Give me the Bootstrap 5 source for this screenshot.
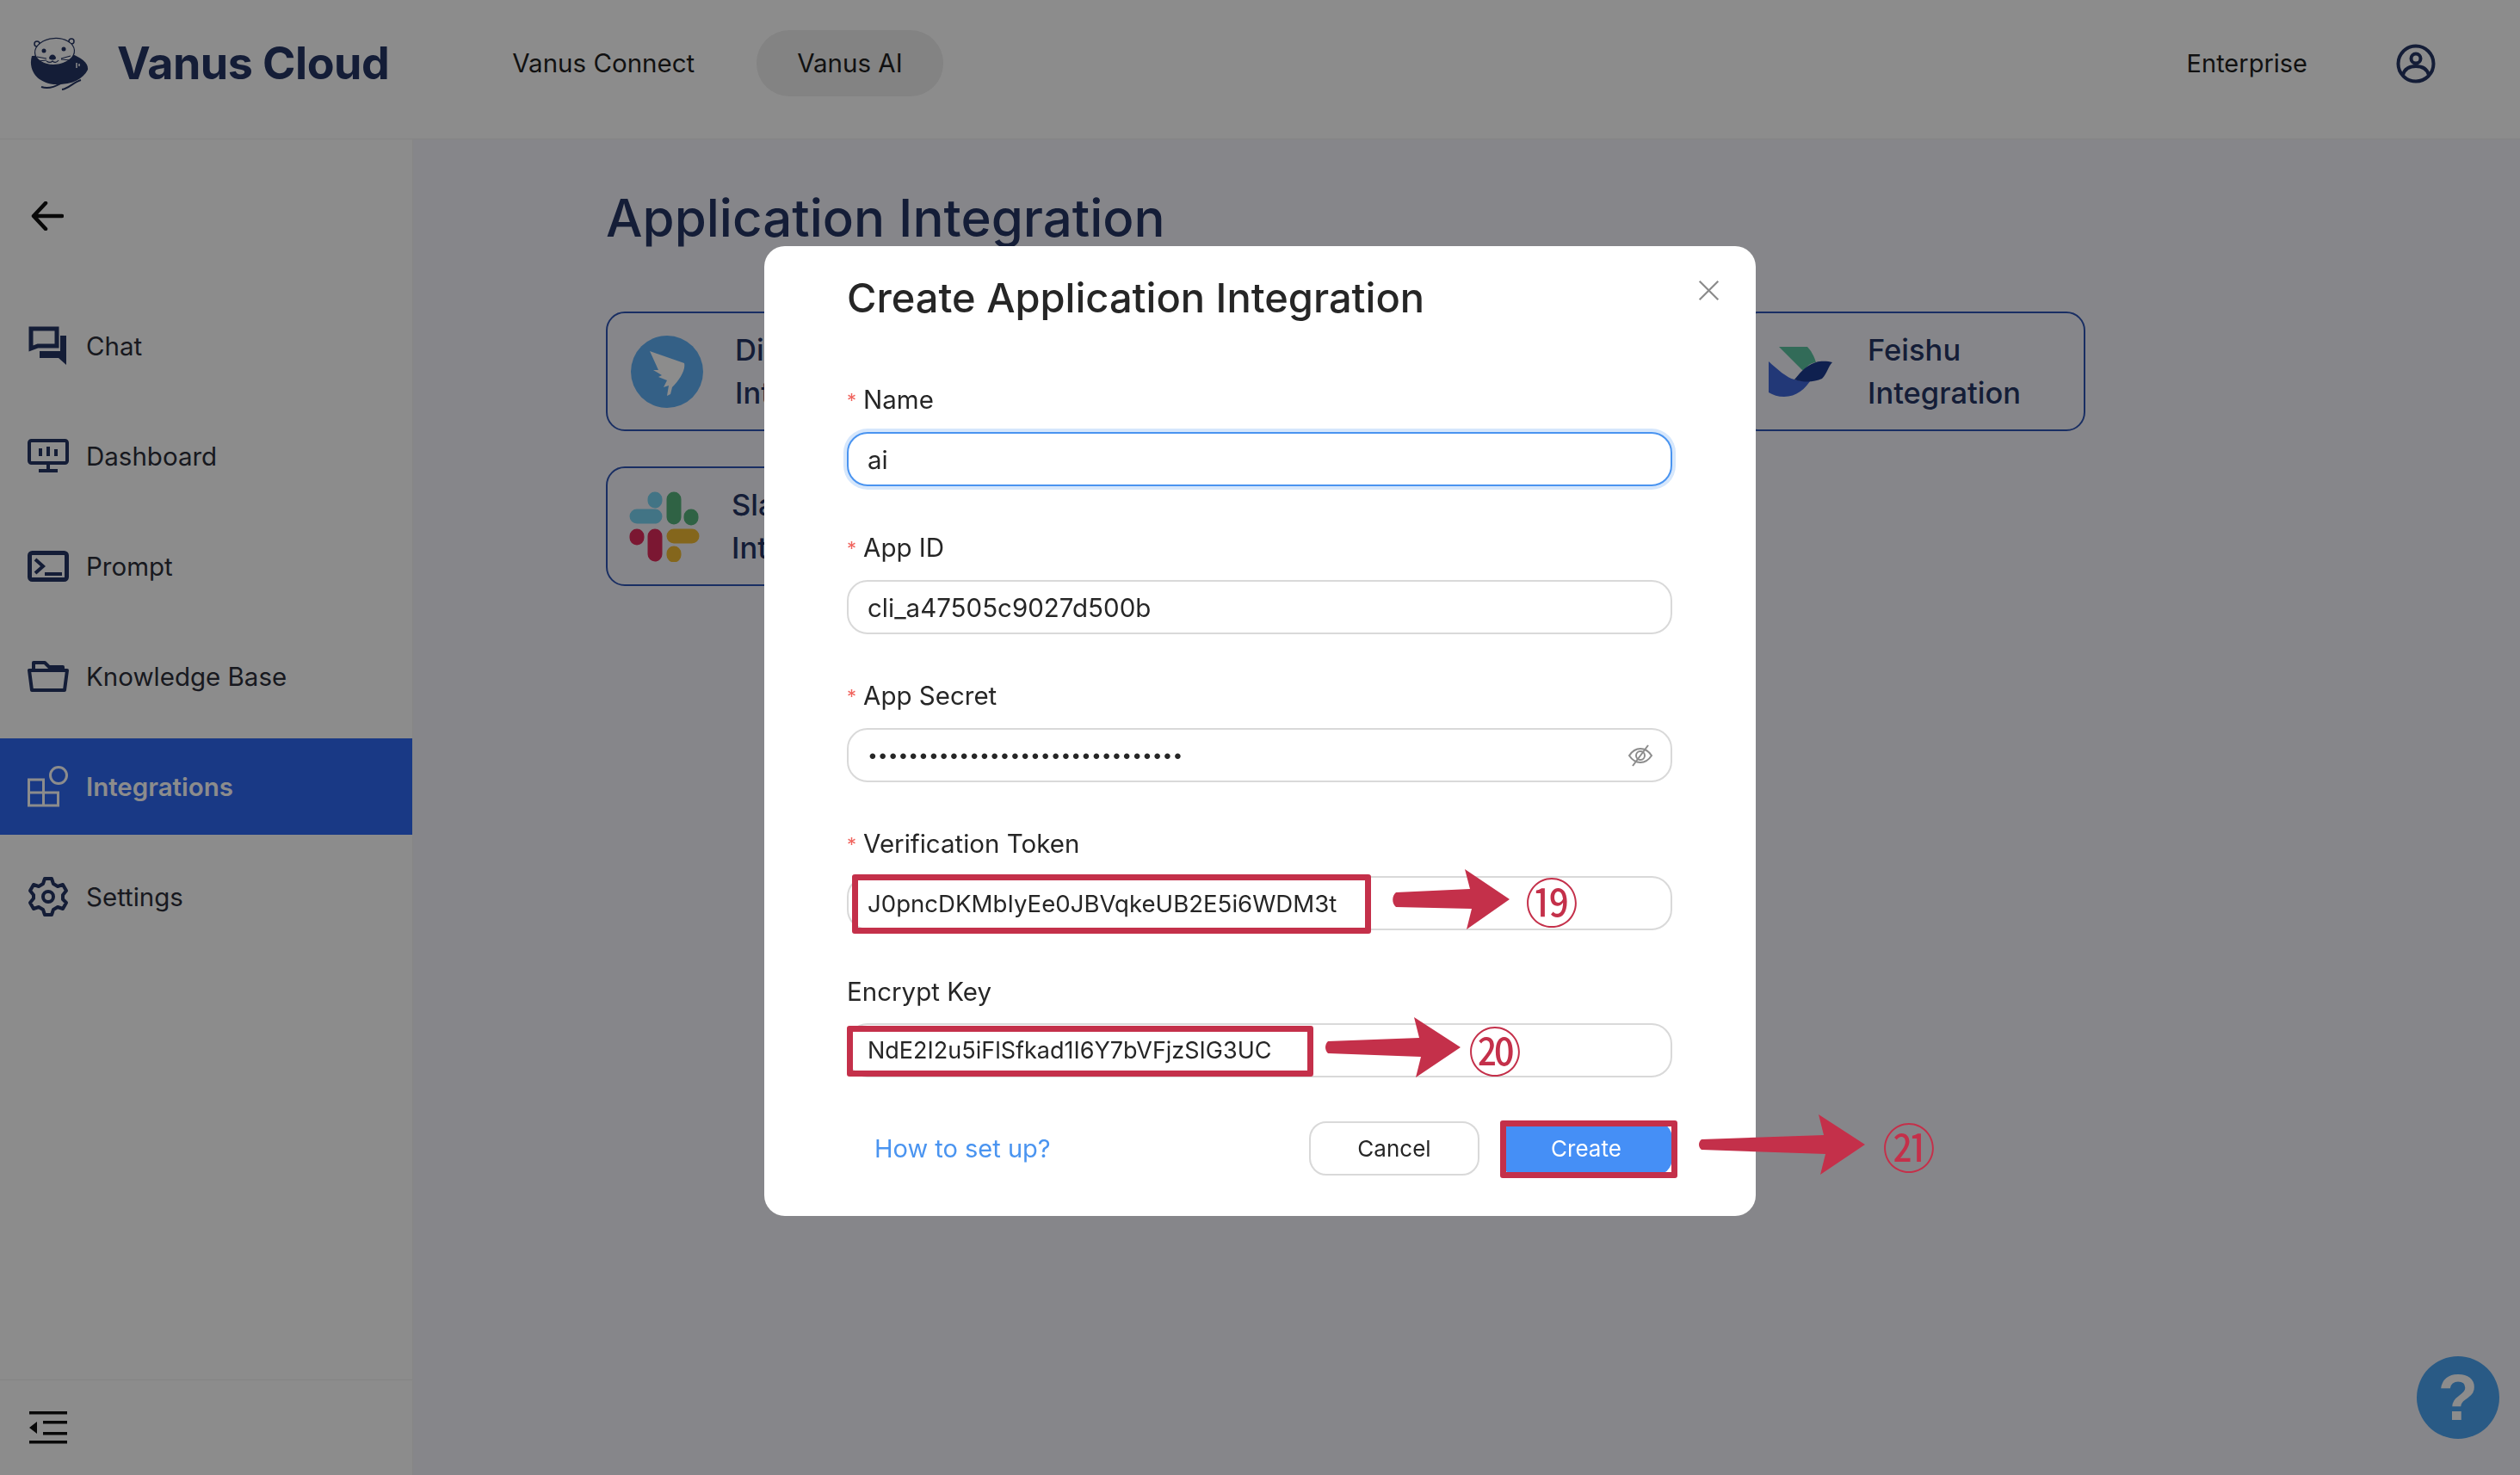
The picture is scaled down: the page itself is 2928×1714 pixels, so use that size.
<!DOCTYPE html>
<html lang="en">
<head>
    <meta charset="UTF-8">
    <meta name="viewport" content="width=device-width, initial-scale=1.0">
    <title>Create Application Integration</title>
    <link href="https://cdn.jsdelivr.net/npm/bootstrap@5.3.1/dist/css/bootstrap.min.css" rel="stylesheet">
    <style>
        html, body { height: 100%; }
        body {
            background: #fff;
            font-family: "Inter", "Noto Sans", sans-serif;
            overflow: hidden;
        }
        .app-top {
            height: 162px;
            padding: 0 0 14px 34px;
            border-bottom: 1px solid #f0f0f0;
        }
        .logo-name { font-size: 52px; font-weight: 700; color: #263664; margin-left: 32px; letter-spacing: -.5px; white-space: nowrap; }
        .top-link { font-size: 29.5px; color: #1f1f1f; padding: 0 47px; height: 77px; line-height: 77px; border-radius: 38px; text-decoration: none; }
        .top-links { margin-left: 96px; gap: 25px; }
        .top-link.on { background: #eeeeee; }
        .top-right { margin-left: auto; padding-right: 98px; gap: 103px; }
        .enterprise { font-size: 29px; color: #1f1f1f; }

        .app-body { height: 1552px; }
        .side {
            width: 480px;
            background: #fff;
            border-right: 1px solid #f5f5f5;
        }
        .back-row { height: 184px; padding: 72px 0 0 36px; }
        .side-item {
            height: 112px;
            margin-bottom: 16px;
            padding-left: 32px;
            gap: 20px;
            font-size: 29.5px;
            color: #2c2f3a;
        }
        .side-item svg { width: 48px; height: 48px; flex: none; }
        .side-item.on { background: #2f69f3; color: #fff; font-weight: 600; }
        .side-foot { height: 111px; border-top: 1px solid #f0f0f0; padding-left: 34px; }
        .page { background: #f5f5fb; padding: 53px 0 0 224px; position: relative; }
        .page-title { font-size: 60px; font-weight: 500; color: #263664; margin: 0 0 71px; line-height: 76px; }
        .card-row { width: 1719px; margin-bottom: 41px; }
        .int-card {
            width: 403px;
            height: 139px;
            border: 2px solid #2f55b4;
            border-radius: 22px;
            padding-left: 27px;
            gap: 37px;
            font-size: 34.5px;
            line-height: 50px;
            font-weight: 500;
            color: #263664;
        }
        .int-card svg { flex: none; }
        .int-card.slack-card { padding-left: 25px; }
        .help-btn {
            position: absolute;
            right: 24px;
            bottom: 42px;
            width: 96px;
            height: 96px;
            border-radius: 50%;
            background: #4ba4f2;
            color: #fff;
            font: 700 76px/96px "Liberation Sans", sans-serif;
            text-align: center;
        }

        .modal-backdrop.show { opacity: .45; }
        .modal-dialog.create-dialog { max-width: 1152px; width: 1152px; margin: 286px auto 0; }
        .create-box {
            height: 1127px;
            border: 0;
            border-radius: 24px;
            padding: 0 97px 0 96px;
            font-size: 28px;
            color: #262626;
        }
        .create-head { height: 122px; padding-top: 22px; }
        .create-title { font-size: 47px; font-weight: 500; margin: 0; line-height: 76px; color: #262626; }
        .close-x { position: absolute; top: 38px; right: 41px; width: 27px; height: 27px; }
        .field-block { height: 172px; padding-top: 37px; }
        .field-label { font-size: 29.5px; line-height: 38px; margin-bottom: 18px; color: #262626; display: block; }
        .field-label i { font-style: normal; color: #f0625c; font-size: 22px; margin-right: 8px; vertical-align: 2px; }
        .create-box .form-control {
            height: 63px;
            border-radius: 24px;
            border: 2px solid #d9d9d9;
            font-size: 29.5px;
            padding: 0 22px;
            color: #262626;
            background: #fff;
        }
        .create-box .form-control.focused { border-color: #4a94f0; box-shadow: 0 0 0 4px #d6e7fc; }
        .create-box .form-control.dots { font-size: 21px; }
        .create-box .form-control.token-text { font-size: 27.6px; }
        .create-box .form-control.key-text { font-size: 27px; }
        .pass-wrap { position: relative; }
        .eye-off { position: absolute; right: 22px; top: 17px; width: 30px; height: 30px; }
        .create-foot { margin-top: 35px; }
        .help-link { font-size: 29px; color: #4a94f0; text-decoration: none; margin-left: 32px; }
        .btn-cancel, .btn-create {
            height: 63px;
            border-radius: 20px;
            font-size: 26px;
            padding: 0;
        }
        .btn-cancel { width: 198px; border: 2px solid #d9d9d9; background: #fff; color: #262626; margin-left: auto; }
        .btn-create { width: 200px; border: 0; background: #458ff6; color: #fff; margin-left: 24px; }

        .anno-box { position: absolute; border: 7px solid #c4304a; border-radius: 3px; }
        .box-19 { left: 102px; top: 730px; width: 603px; height: 69px; }
        .box-20 { left: 96px; top: 906px; width: 542px; height: 59px; }
        .box-21 { left: 855px; top: 1016px; width: 206px; height: 67px; }
        .anno-arrow { position: absolute; }
        .arrow-19 { left: 730px; top: 724px; }
        .arrow-20 { left: 651px; top: 896px; }
        .arrow-21 { left: 1085px; top: 1009px; }
        .anno-num {
            position: absolute;
            font-family: "Liberation Serif", "DejaVu Serif", "Noto Sans CJK JP", serif;
            color: #c4304a;
            font-size: 62px;
            line-height: 62px;
        }
        .num-19 { left: 884px; top: 735px; }
        .num-20 { left: 818px; top: 908px; }
        .num-21 { left: 1299px; top: 1020px; }
    </style>
</head>
<body>
    <header class="app-top d-flex align-items-center">
        <svg width="70" height="62" viewBox="0 0 70 62">
            <path d="M3 22C-1 36 6 52 28 55c20 1 34-5 40-17 1-8-8-14-18-18z" fill="#263664"/>
            <circle cx="9" cy="8" r="3" fill="#fff" stroke="#263664" stroke-width="1.500"/>
            <circle cx="49" cy="5" r="3" fill="#fff" stroke="#263664" stroke-width="1.500"/>
            <ellipse cx="29.500" cy="17" rx="23" ry="15.500" transform="rotate(-4 29.500 17)" fill="#fff" stroke="#263664" stroke-width="1.200"/>
            <circle cx="17" cy="16" r="2.500" fill="#263664"/><circle cx="40" cy="14" r="2.500" fill="#263664"/>
            <path d="M23 25c0-6 8-6 8 0-2 2-6 2-8 0z" fill="#263664"/>
            <path d="M9 23l11 2M10 28l10-1M48 22l-11 3M48 27l-11-1M20 28c3 2 5 2 7 0 2 2 5 2 7-1" stroke="#263664" stroke-width="1.200" fill="none"/>
            <path d="M55 30v6M58 31v3" stroke="#fff" stroke-width="1.500"/>
            <path d="M14 58c12 4 22-4 36-11 3-1 6-2 8-2M38 61c8-1 14-9 22-11" stroke="#263664" stroke-width="2" fill="none"/>
        </svg>
        <span class="logo-name">Vanus Cloud</span>
        <nav class="top-links d-flex align-items-center">
            <a class="top-link" href="#">Vanus Connect</a>
            <a class="top-link on" href="#">Vanus AI</a>
        </nav>
        <div class="top-right d-flex align-items-center">
            <span class="enterprise">Enterprise</span>
            <svg width="46" height="46" viewBox="0 0 46 46" fill="none" stroke="#263664" stroke-width="4">
                <circle cx="23" cy="23" r="20.500"/><circle cx="23" cy="17" r="5.500"/><path d="M8 36c2-7 8-10 15-10s13 3 15 10"/>
            </svg>
        </div>
    </header>

    <div class="app-body d-flex">
        <aside class="side d-flex flex-column">
            <div class="back-row">
                <svg width="38" height="34" viewBox="0 0 38 34" fill="none" stroke="#111" stroke-width="4.500" stroke-linecap="round" stroke-linejoin="round"><path d="M36 17H3M17 2L3 17l14 15"/></svg>
            </div>
            <div class="side-item d-flex align-items-center">
                <svg viewBox="0 0 48 48" fill="none" stroke="#263664" stroke-width="5"><path d="M4 4h30v20H12l-8 3z"/><path d="M14 30h24V12h7v34l-9-8H14z" fill="#263664" stroke="none"/></svg>
                <span>Chat</span>
            </div>
            <div class="side-item d-flex align-items-center">
                <svg viewBox="0 0 48 48" fill="none" stroke="#263664" stroke-width="4"><rect x="2" y="6" width="44" height="26" rx="2.500"/><path d="M24 32v7M13 41h22M15 15v9M24 13v11M33 16v8"/></svg>
                <span>Dashboard</span>
            </div>
            <div class="side-item d-flex align-items-center">
                <svg viewBox="0 0 48 48" fill="none" stroke="#263664" stroke-width="5"><rect x="2.500" y="8.500" width="43" height="31" rx="3"/><path d="M9 16l9 8-9 8M20 33h20" stroke-width="4"/></svg>
                <span>Prompt</span>
            </div>
            <div class="side-item d-flex align-items-center">
                <svg viewBox="0 0 48 48" fill="none" stroke="#263664" stroke-width="4" stroke-linejoin="round"><path d="M7 17V8h13l5 5h16v5"/><path d="M2 17h44l-3 23H5z"/></svg>
                <span>Knowledge Base</span>
            </div>
            <div class="side-item on d-flex align-items-center">
                <svg viewBox="0 0 48 48" fill="none" stroke="#fff" stroke-width="3"><path d="M1.500 16h17v30h-17zM1.500 31h34v15h-17"/><circle cx="36" cy="11" r="9.500"/></svg>
                <span>Integrations</span>
            </div>
            <div class="side-item d-flex align-items-center">
                <svg viewBox="0 0 48 48" fill="none" stroke="#263664" stroke-width="4" stroke-linejoin="round"><circle cx="24" cy="24" r="6"/><path d="M20 3h8l2 6 5 3 6-2 4 7-4 5v5l4 4-4 7-6-2-5 3-2 6h-8l-2-6-5-3-6 2-4-7 4-5v-4l-4-5 4-7 6 2 5-3z"/></svg>
                <span>Settings</span>
            </div>
            <div class="side-foot mt-auto d-flex align-items-center">
                <svg width="44" height="38" viewBox="0 0 44 38" fill="#111"><path d="M0 0h44v3.500H0zM16 11h28v3.500H16zM16 24h28v3.500H16zM0 34h44v3.500H0zM9 12v14l-9-7z"/></svg>
            </div>
        </aside>
        <main class="page flex-grow-1">
            <h1 class="page-title">Application Integration</h1>
            <div class="card-row d-flex justify-content-between">
                <div class="int-card d-flex align-items-center">
                    <svg width="84" height="84" viewBox="0 0 84 84"><circle cx="42" cy="42" r="42" fill="#5fb0f5"/><path d="M22 18l40 14c2 8-6 20-14 28l-2 8-4 2 2-12-6 2 4-8-10-4 4-2-10-6 6 0z" fill="#fff"/></svg>
                    <div>DingTalk<br>Integration</div>
                </div>
                <div class="int-card d-flex align-items-center">
                    <svg width="84" height="58" viewBox="-6 0 84 58"><path d="M12 0h33c4 4 8 11 10 18-7 1-12 5-14 11z" fill="#5cc3a0"/><path d="M0 17c10 9 21 19 30 21 9 3 16 0 20-1-7 12-18 21-32 21-7 0-13-2-18-5z" fill="#3f66d9"/><path d="M30 38c6-6 10-15 25-20 7-2 14-1 19 0-5 5-6 13-12 19-9 4-20 5-32 1z" fill="#1c3b91"/></svg>
                    <div>Feishu<br>Integration</div>
                </div>
            </div>
            <div class="card-row d-flex">
                <div class="int-card slack-card d-flex align-items-center">
                    <svg width="82" height="82" viewBox="0 0 82 82" fill="none" stroke-width="17" stroke-linecap="round"><path d="M30 29H9" stroke="#79d3f2"/><path d="M30 9v2" stroke="#79d3f2"/><path d="M52 9v21" stroke="#56b37d"/><path d="M72 29v2" stroke="#56b37d"/><path d="M52 52h21" stroke="#f0ba33"/><path d="M52 72v2" stroke="#f0ba33"/><path d="M30 52v21" stroke="#e02a5c"/><path d="M9 52v2" stroke="#e02a5c"/></svg>
                    <div>Slack<br>Integration</div>
                </div>
            </div>
            <div class="help-btn">?</div>
        </main>
    </div>

    <div class="modal-backdrop show"></div>

    <div class="modal d-block">
        <div class="modal-dialog create-dialog">
            <div class="modal-content create-box">
                <div class="create-head"><h2 class="create-title">Create Application Integration</h2></div>
                <svg class="close-x" viewBox="0 0 30 30" stroke="#8c8c8c" stroke-width="2.500"><path d="M3 3l24 24M27 3L3 27"/></svg>

                <div class="field-block"><label class="field-label"><i>*</i>Name</label><input class="form-control focused" value="ai"></div>
                <div class="field-block"><label class="field-label"><i>*</i>App ID</label><input class="form-control" value="cli_a47505c9027d500b"></div>
                <div class="field-block"><label class="field-label"><i>*</i>App Secret</label>
                    <div class="pass-wrap">
                        <input class="form-control dots" type="password" value="abcdefghijklmnopqrstuvwxyz12345">
                        <svg class="eye-off" viewBox="0 0 30 30" fill="none" stroke="#8c8c8c" stroke-width="2"><path d="M2 15c4-6 8-8 13-8s9 2 13 8c-4 6-8 8-13 8s-9-2-13-8z"/><circle cx="15" cy="15" r="5"/><path d="M24 3L6 27"/></svg>
                    </div>
                </div>
                <div class="field-block"><label class="field-label"><i>*</i>Verification Token</label><input class="form-control token-text" value="J0pncDKMbIyEe0JBVqkeUB2E5i6WDM3t"></div>
                <div class="field-block"><label class="field-label">Encrypt Key</label><input class="form-control key-text" value="NdE2I2u5iFlSfkad1I6Y7bVFjzSIG3UC"></div>

                <div class="create-foot d-flex align-items-center">
                    <a class="help-link" href="#">How to set up?</a>
                    <button type="button" class="btn btn-cancel">Cancel</button>
                    <button type="button" class="btn btn-create">Create</button>
                </div>

                <div class="anno-box box-19"></div>
                <div class="anno-box box-20"></div>
                <div class="anno-box box-21"></div>
                <svg class="anno-arrow arrow-19" width="136" height="70" viewBox="0 0 136 70" fill="#c4304a"><path d="M4 27l86-4L84 0l52 35-50 35 6-24-88-2c-5-4-5-13 0-17z"/></svg>
                <svg class="anno-arrow arrow-20" width="158" height="70" viewBox="0 0 158 70" fill="#c4304a"><path d="M4 28l106-4L104 0l54 35-52 35 6-24-108-4c-4-4-4-10 0-14z"/></svg>
                <svg class="anno-arrow arrow-21" width="194" height="70" viewBox="0 0 194 70" fill="#c4304a"><path d="M4 29l142-5L140 0l54 35-52 35 6-24-144-5c-4-3-4-9 0-12z"/></svg>
                <span class="anno-num num-19">⑲</span>
                <span class="anno-num num-20">⑳</span>
                <span class="anno-num num-21">㉑</span>
            </div>
        </div>
    </div>

    <script src="https://cdn.jsdelivr.net/npm/bootstrap@5.3.1/dist/js/bootstrap.bundle.min.js"></script>
</body>
</html>
